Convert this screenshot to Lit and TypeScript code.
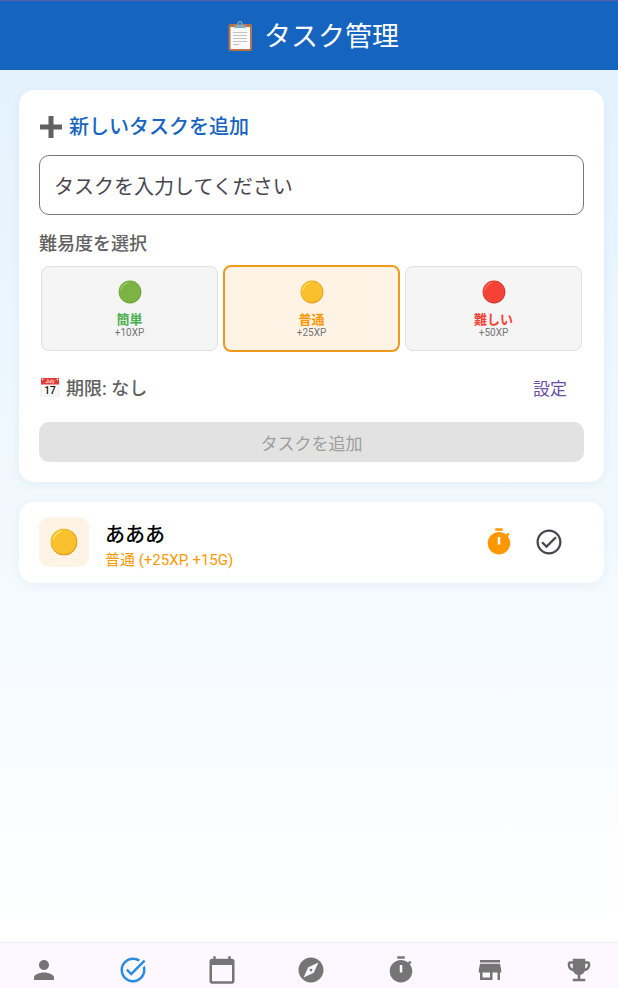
import { LitElement, html, css, svg } from "lit";
import { customElement, property, state } from "lit/decorators.js";

const ICONS: Record<string, unknown> = {
  person: svg`<path d="M12 12c2.210 0 4-1.790 4-4s-1.790-4-4-4-4 1.790-4 4 1.790 4 4 4zm0 2c-2.670 0-8 1.340-8 4v2h16v-2c0-2.660-5.330-4-8-4z"/>`,
  task: svg`<path d="M22 5.180 10.590 16.600l-4.240-4.240 1.410-1.410 2.830 2.830 10-10L22 5.180zm-2.210 5.040c.130.570.210 1.170.210 1.780 0 4.420-3.580 8-8 8s-8-3.580-8-8 3.580-8 8-8c1.580 0 3.040.460 4.280 1.250l1.440-1.440C16.100 2.670 14.130 2 12 2 6.480 2 2 6.480 2 12s4.480 10 10 10 10-4.480 10-10c0-1.190-.220-2.330-.600-3.390l-1.610 1.610z"/>`,
  calendar: svg`<path d="M20 3h-1V1h-2v2H7V1H5v2H4c-1.100 0-2 .900-2 2v16c0 1.100.900 2 2 2h16c1.100 0 2-.900 2-2V5c0-1.100-.900-2-2-2zm0 18H4V8h16v13z"/>`,
  explore: svg`<path d="M12 10.900c-.610 0-1.100.490-1.100 1.100s.490 1.100 1.100 1.100c.610 0 1.100-.490 1.100-1.100s-.490-1.100-1.100-1.100zM12 2C6.480 2 2 6.480 2 12s4.480 10 10 10 10-4.480 10-10S17.520 2 12 2zm2.190 12.190L6 18l3.810-8.190L18 6l-3.810 8.190z"/>`,
  timer: svg`<path d="M9 1h6v2H9zM19.030 7.390l1.420-1.420c-.430-.510-.900-.990-1.410-1.410l-1.420 1.420C16.070 4.740 14.120 4 12 4c-4.970 0-9 4.030-9 9s4.020 9 9 9 9-4.030 9-9c0-2.120-.740-4.070-1.970-5.610zM13 14h-2V8h2v6z"/>`,
  store: svg`<path d="M20 4H4v2h16V4zm1 10v-2l-1-5H4l-1 5v2h1v6h10v-6h4v6h2v-6h1zm-9 4H6v-4h6v4z"/>`,
  trophy: svg`<path d="M19 5h-2V3H7v2H5c-1.100 0-2 .900-2 2v1c0 2.550 1.920 4.630 4.390 4.940.630 1.500 1.980 2.630 3.610 2.960V19H7v2h10v-2h-4v-3.100c1.630-.330 2.980-1.460 3.610-2.960C19.080 12.630 21 10.550 21 8V7c0-1.100-.900-2-2-2zM5 8V7h2v3.820C5.840 10.400 5 9.300 5 8zm14 0c0 1.300-.840 2.400-2 2.820V7h2v1z"/>`,
  check: svg`<path d="M12 2C6.480 2 2 6.480 2 12s4.480 10 10 10 10-4.480 10-10S17.520 2 12 2zm0 18.200c-4.520 0-8.200-3.680-8.200-8.200S7.480 3.800 12 3.800s8.200 3.680 8.200 8.200-3.680 8.200-8.200 8.200zm4.900-12.700L10 14.400l-2.900-2.900-1.300 1.300 4.200 4.200 8.200-8.200-1.300-1.300z"/>`,
};

const icon = (name: string) =>
  html`<svg class="icon" viewBox="0 0 24 24" aria-hidden="true">${ICONS[name]}</svg>`;

type Level = { id: string; label: string; xp: number };

const LEVELS: Level[] = [
  { id: "easy", label: "簡単", xp: 10 },
  { id: "normal", label: "普通", xp: 25 },
  { id: "hard", label: "難しい", xp: 50 },
];

const TABS = [
  ["person", "プロフィール"],
  ["task", "タスク"],
  ["calendar", "カレンダー"],
  ["explore", "冒険"],
  ["timer", "タイマー"],
  ["store", "ショップ"],
  ["trophy", "実績"],
];

@customElement("level-ball")
class LevelBall extends LitElement {
  @property({ reflect: true }) level = "normal";
  static styles = css`
    :host { display: block; width: 24px; height: 24px; color: #fbc02d; --rim: #e29a13; --shine: #fff176; }
    :host([level="easy"]) { color: #7cb342; --rim: #689f38; --shine: #aed581; }
    :host([level="hard"]) { color: #f44336; --rim: #d32f2f; --shine: #ff8a80; }
    .ball { display: block; width: 100%; height: 100%; }
    .rim { fill: var(--rim); }
    .body { fill: currentColor; }
    .shine { fill: none; stroke: var(--shine); stroke-width: 1; stroke-linecap: round; }
  `;
  render() {
    return html`<svg class="ball" viewBox="0 0 24 24" aria-hidden="true">
      <circle class="rim" cx="12" cy="12" r="11.400" />
      <circle class="body" cx="11.700" cy="11.700" r="10.800" />
      <path class="shine" d="M3 9.500C4 6.500 6 4 9.500 2.800" />
    </svg>`;
  }
}

@customElement("app-root")
class AppRoot extends LitElement {
  @state() private level = "normal";
  @state() private text = "";

  static styles = css`
    * { box-sizing: border-box; }
    :host {
      display: flex; flex-direction: column; min-height: 100vh; overflow: hidden;
      font-family: Roboto, "Noto Sans CJK JP", sans-serif; color: #000;
    }
    button, input { font: inherit; color: inherit; margin: 0; padding: 0; border: 0; background: none; }
    .icon { display: block; width: 30px; height: 30px; fill: currentColor; }

    .header {
      display: flex; align-items: center; justify-content: center; gap: 10px;
      height: 70px; padding: 2px 0 0 7px; background: #1565c0; border-top: 1px solid #5b5ba5; color: #fff;
    }
    .header-title { margin: 0; font-size: 27px; line-height: 40px; font-weight: 400; }
    .clipboard { width: 28px; height: 32px; }

    .content {
      flex: 1; display: flex; flex-direction: column; gap: 20px;
      padding: 20px 14px 20px 19px; background: linear-gradient(#e3f2fd, #fff);
    }
    .card { background: #fff; border-radius: 15px; box-shadow: 0 2px 10px rgba(30, 80, 140, .06); }
    .form { display: flex; flex-direction: column; padding: 20px; }
    .form-title {
      display: flex; align-items: center; gap: 6px; margin: 0 0 11px;
      font-size: 20px; line-height: 34px; font-weight: 500; color: #1565c0;
    }
    .plus { width: 24px; height: 24px; }
    .field {
      width: 100%; height: 60px; padding: 4px 14px 0; border: 1px solid #79747e; border-radius: 10px;
      font-size: 20px; color: #222;
    }
    .field::placeholder { color: #49454f; opacity: 1; }
    .levels { border: 0; margin: 16px 0 0; padding: 0; min-width: 0; }
    .label { padding: 0; margin: 0 0 9px; font-size: 18px; line-height: 26px; font-weight: 500; color: #616161; }
    .options { display: grid; grid-template-columns: repeat(3, 1fr); gap: 5px; padding: 0 2px; }
    .option {
      position: relative; display: flex; flex-direction: column; align-items: center;
      height: 85px; padding-top: 13px; border: 1px solid #e0e0e0; border-radius: 8px; background: #f5f5f5;
      cursor: pointer;
    }
    .option:has(.radio:checked) {
      height: 87px; margin: -1px 0; border: 2px solid #ef9a1a; background: #fff3e5;
    }
    .radio { position: absolute; inset: 0; width: 100%; height: 100%; opacity: 0; }
    .option-name { margin-top: 7px; font-size: 13px; line-height: 18px; font-weight: 700; }
    .option-xp { font-size: 10px; line-height: 7px; color: #757575; }
    .easy { color: #4caf50; }
    .normal { color: #ff9800; }
    .hard { color: #f44336; }

    .deadline { display: flex; align-items: center; gap: 5px; height: 40px; margin: 16px 0 15px; }
    .july { width: 22px; height: 22px; }
    .july-text { font-family: Roboto, sans-serif; text-anchor: middle; }
    .deadline-text { flex: 1; font-size: 18px; font-weight: 500; color: #616161; }
    .set { height: 40px; padding: 0 17px; font-size: 17px; color: #6750a4; }
    .submit { height: 40px; border-radius: 10px; background: #e2e2e2; color: #9e9e9e; font-size: 17px; }

    .task { display: flex; align-items: flex-start; padding: 15px 20px 10px; }
    .avatar {
      display: flex; align-items: center; justify-content: center;
      width: 50px; height: 50px; margin-right: 16px; border-radius: 10px; background: #fff3e5;
    }
    .avatar-ball { width: 28px; height: 28px; }
    .task-body { flex: 1; display: flex; flex-direction: column; padding-top: 6px; }
    .task-name { margin: 0; font-size: 20px; line-height: 24px; font-weight: 500; }
    .task-sub { margin: 0; font-size: 15px; line-height: 26px; color: #ff9800; }
    .action { display: flex; align-items: center; justify-content: center; width: 50px; height: 50px; }
    .action.start { color: #ff9800; }
    .action.done { color: #49454f; margin-right: 10px; }

    .nav {
      display: flex; margin: 0 -6px 0 -1px; padding: 12px 0 3px;
      background: #fdf7ff; border-top: 1px solid #f0ecf3;
    }
    .tab { flex: 1; display: flex; justify-content: center; color: #757575; }
    .tab.active { color: #2b8be0; }
  `;

  private option(l: Level) {
    return html`<label class="option">
      <input class="radio" type="radio" name="level" .value=${l.id}
        .checked=${this.level === l.id} @change=${() => (this.level = l.id)} />
      <level-ball level=${l.id}></level-ball>
      <span class="option-name ${l.id}">${l.label}</span>
      <span class="option-xp">+${l.xp}XP</span>
    </label>`;
  }

  render() {
    return html`
      <header class="header">
        <svg class="clipboard" viewBox="0 0 28 32" aria-hidden="true">
          <rect x="2.500" y="3" width="23.500" height="27" rx="2" fill="#b87348" />
          <rect x="4.500" y="6" width="19.500" height="22" fill="#fafafa" />
          <path d="M7 11.500h14M7 14.500h14M7 17.500h14M7 20.500h14M7 23.500h6" stroke="#bdc3c7" />
          <path d="M8 7V4.500h3.200a2.900 2.900 0 0 1 5.600 0H20V7z" fill="#82aec0" />
          <circle cx="14" cy="2.500" r="1.900" fill="#1565c0" stroke="#82aec0" stroke-width="1.200" />
        </svg>
        <h1 class="header-title">タスク管理</h1>
      </header>
      <main class="content">
        <form class="card form" @submit=${(e: Event) => e.preventDefault()}>
          <h2 class="form-title">
            <svg class="plus" viewBox="0 0 24 24" aria-hidden="true">
              <path d="M9.500 1h5v8.500H23v5h-8.500V23h-5v-8.500H1v-5h8.500z" fill="#616161" />
            </svg>
            新しいタスクを追加
          </h2>
          <input class="field" type="text" placeholder="タスクを入力してください" aria-label="タスクを入力してください"
            .value=${this.text} @input=${(e: Event) => (this.text = (e.target as HTMLInputElement).value)} />
          <fieldset class="levels">
            <legend class="label">難易度を選択</legend>
            <div class="options">${LEVELS.map((l) => this.option(l))}</div>
          </fieldset>
          <div class="deadline">
            <svg class="july" viewBox="0 0 22 22" aria-hidden="true">
              <rect x="2" y="2" width="18" height="18" fill="#fafafa" stroke="#e0e0e0" stroke-width=".6" />
              <path d="M2 2h18v6.500H2z" fill="#e53935" />
              <circle cx="3.600" cy="3.400" r=".8" fill="#fff" />
              <circle cx="18.400" cy="3.400" r=".8" fill="#fff" />
              <text class="july-text" x="11" y="7" font-size="5" fill="#fff">July</text>
              <text class="july-text" x="11" y="18" font-size="10" font-weight="500" fill="#111">17</text>
            </svg>
            <span class="deadline-text">期限: なし</span>
            <button class="set" type="button">設定</button>
          </div>
          <button class="submit" type="submit" ?disabled=${!this.text}>タスクを追加</button>
        </form>
        <article class="card task">
          <div class="avatar"><level-ball class="avatar-ball" level="normal"></level-ball></div>
          <div class="task-body">
            <h3 class="task-name">あああ</h3>
            <p class="task-sub">普通 (+25XP, +15G)</p>
          </div>
          <button class="action start" type="button" aria-label="タイマー開始">${icon("timer")}</button>
          <button class="action done" type="button" aria-label="完了">${icon("check")}</button>
        </article>
      </main>
      <nav class="nav">
        ${TABS.map(([name, label]) => html`<button type="button" aria-label=${label}
          class="tab ${name === "task" ? "active" : ""}">${icon(name)}</button>`)}
      </nav>
    `;
  }
}
